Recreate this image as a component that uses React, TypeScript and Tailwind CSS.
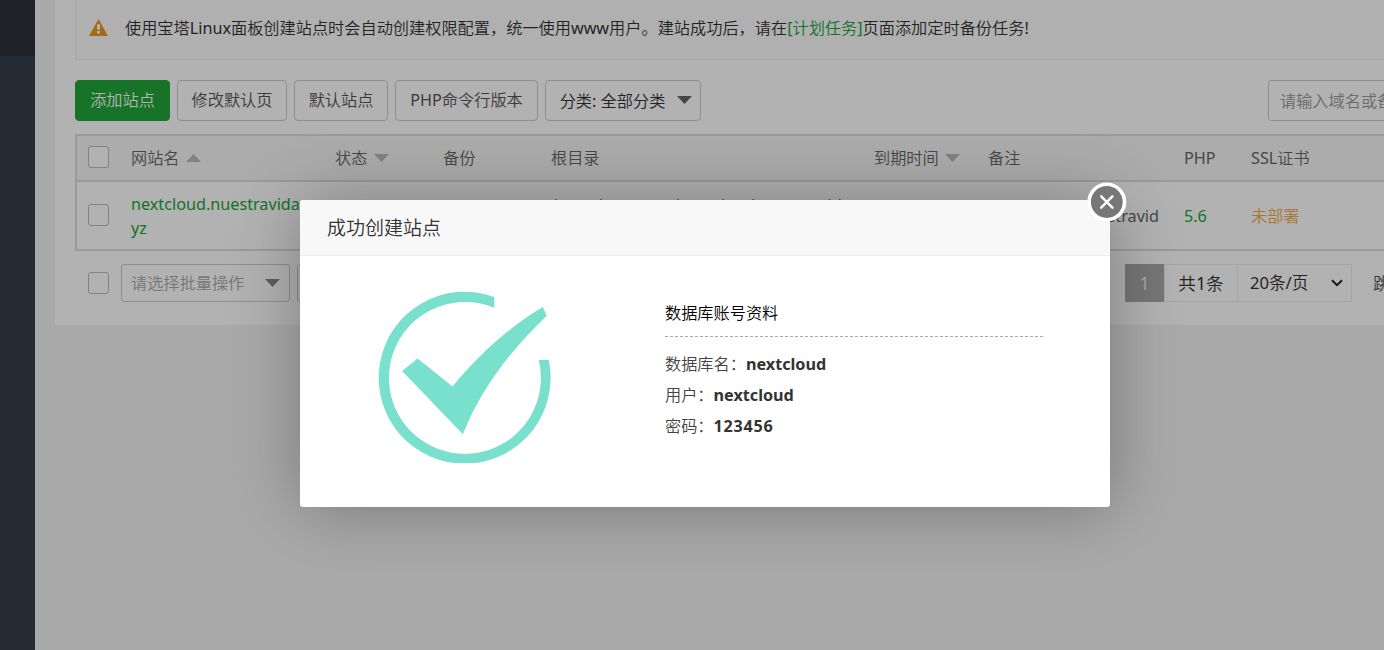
import React from "react";

const Caret = ({ up = false, className = "" }: { up?: boolean; className?: string }) => (
  <svg width="15" height="8" viewBox="0 0 15 8" className={className}>
    <path d={up ? "M0 8L7.5 0L15 8Z" : "M0 0H15L7.5 8Z"} fill="currentColor" />
  </svg>
);

const CheckBox = ({ className = "" }: { className?: string }) => (
  <span className={`box-border h-[22px] w-[21px] shrink-0 rounded-[3px] border border-[#bbb] bg-white ${className}`} />
);

const Button = ({ children, className }: { children: React.ReactNode; className: string }) => (
  <button className={`flex h-[41px] shrink-0 items-center justify-center rounded-[4px] border pb-px ${className}`}>
    {children}
  </button>
);

const columns = "grid grid-cols-[54px_205px_107px_108px_323px_115px_195px_67px_220px]";

function SitePage() {
  return (
    <div className="flex h-[650px] w-[1384px] overflow-hidden bg-[#f2f2f2]">
      <aside className="w-[35px] shrink-0 bg-[#363d49]">
        <div className="h-[56px] bg-[#2c3138]" />
      </aside>
      <main className="ml-5 h-[325px] w-[1329px] shrink-0 overflow-hidden bg-white pl-5">
        <div className="flex h-[60px] w-[1400px] items-center border-b border-l border-[#ececec] bg-[#fcfcfc] pb-[3px] pl-[13px] text-[#333]">
          <svg width="19" height="17" viewBox="0 0 19 17" className="mr-[17px] -mt-[2px]">
            <path d="M9.5 0L19 17H0Z" fill="#f0981c" />
            <path d="M8 5.2H11V10.5H8ZM8 12H11V14.6H8Z" fill="#fff" />
          </svg>
          <p className="whitespace-nowrap">
            使用宝塔Linux面板创建站点时会自动创建权限配置，统一使用www用户。建站成功后，请在
            <a className="text-[#20a53a]">[计划任务]</a>页面添加定时备份任务!
          </p>
        </div>

        <div className="mt-5 flex w-[1400px] gap-[7px] text-[#555]">
          <Button className="w-[95px] border-[#20a53a] bg-[#20a53a] text-white">添加站点</Button>
          <Button className="w-[110px] border-[#ccc] bg-white">修改默认页</Button>
          <Button className="w-[94px] border-[#ccc] bg-white">默认站点</Button>
          <Button className="w-[143px] border-[#ccc] bg-white">PHP命令行版本</Button>
          <Button className="w-[156px] gap-3 border-[#ccc] bg-white pl-[6px] text-[#333]">
            <span className="pt-px">分类: 全部分类</span>
            <Caret className="text-[#666]" />
          </Button>
          <div className="ml-[560px] flex h-[41px] w-[250px] items-center rounded-[3px] border border-[#ccc] pl-[11px] text-[#999]">
            请输入域名或备注
          </div>
        </div>

        <section className="mt-[13px] h-[117px] w-[1400px] border-2 border-[#ddd]">
          <div className={`${columns} h-[46px] items-center border-b-2 border-[#ddd] bg-[#f6f6f6] text-[#666]`}>
            <CheckBox className="-mt-[2px] ml-[11px]" />
            <span className="flex items-center gap-[6px]">网站名<Caret up className="text-[#bbb]" /></span>
            <span className="-ml-px flex items-center gap-[7px]">状态<Caret className="text-[#bbb]" /></span>
            <span>备份</span>
            <span>根目录</span>
            <span className="flex items-center gap-[6px]">到期时间<Caret className="text-[#bbb]" /></span>
            <span className="-ml-px">备注</span>
            <span>PHP</span>
            <span>SSL证书</span>
          </div>
          <div className={`${columns} h-[67px] items-center text-[#666]`}>
            <CheckBox className="-mt-px ml-[11px]" />
            <span className="leading-6 text-[#20a53a]">nextcloud.nuestravida<br />yz</span>
            <span />
            <span />
            <span className="pt-[3px] leading-6 tracking-[0.15px] text-[#20a53a]">/www/wwwroot/nextcloud.nuestravida<br />xyz</span>
            <span />
            <span className="pr-[25px] text-right">nextcloud.nuestravid</span>
            <span className="text-[#20a53a]">5.6</span>
            <span className="text-[#f0ad4e]">未部署</span>
          </div>
        </section>

        <div className="mt-[13px] flex h-[38px] w-[1400px] items-center pl-[13px]">
          <CheckBox />
          <div className="ml-3 flex h-[38px] w-[169px] items-center justify-between rounded-[3px] border border-[#ccc] pl-[9px] pr-[9px] text-[#aaa]">
            请选择批量操作
            <Caret className="text-[#888]" />
          </div>
          <div className="ml-[7px] h-[38px] w-[90px] rounded-[3px] border border-[#ccc]" />
          <div className="ml-[738px] flex h-[38px] items-center text-[17.6px] text-[#333]">
            <span className="flex h-[38px] w-[39px] items-center justify-center bg-[#a9a9a9] text-[#eee]">1</span>
            <span className="flex h-[38px] w-[74px] items-center justify-center border border-[#ececec]">共1条</span>
            <span className="-ml-px flex h-[38px] w-[115px] items-center justify-between border border-[#ececec] pl-[12px] pr-[8px] text-[16.6px]">
              20条/页
              <svg width="12" height="8" viewBox="0 0 12 8">
                <path d="M1 1.2L6 6.2L11 1.2" fill="none" stroke="#222" strokeWidth="2" />
              </svg>
            </span>
            <span className="ml-[21px] text-[#555]">跳转到</span>
          </div>
        </div>
      </main>
    </div>
  );
}

const details = [
  { label: "数据库名：", value: "nextcloud", spacing: "" },
  { label: "用户：", value: "nextcloud", spacing: "" },
  { label: "密码：", value: "123456", spacing: "tracking-[0.75px]" },
];

function SuccessDialog() {
  return (
    <div className="absolute left-[300px] top-[200px] h-[307px] w-[810px] rounded-[3px] bg-white shadow-[1px_1px_68px_rgba(0,0,0,0.3)]">
      <header className="flex h-[56px] items-center rounded-t-[3px] border-b border-[#eee] bg-[#f8f8f8] pl-[27px] text-[19px] text-[#333]">
        成功创建站点
      </header>
      <div className="flex">
        <svg width="174" height="171" viewBox="0 0 174 171" className="ml-[78px] mt-[36px] shrink-0">
          <path
            d="M116.3 5A86 86 0 1 0 170.8 68H160.8A76 76 0 1 1 116.3 15.8Z"
            fill="#78e0cd"
          />
          <path d="M24.1 79.1L39.6 66.4L74.6 94.4C98 66 129 36 164.8 15L168.8 23.7C135 56 104 94 84.9 142.2Z" fill="#78e0cd" />
        </svg>
        <div className="ml-[113px] w-[378px] pt-[44px] text-[#444]">
          <h3 className="h-[37px] border-b border-dashed border-[#aaa] leading-[27px] text-black">数据库账号资料</h3>
          <div className="pt-[11px]">
            {details.map(({ label, value, spacing }) => (
              <p key={label} className="flex h-[31px] items-center">
                {label}
                <strong className={`font-bold text-[#333] ${spacing}`}>{value}</strong>
              </p>
            ))}
          </div>
        </div>
      </div>
      <button aria-label="关闭" className="absolute left-[787px] top-[-18px] h-[40px] w-[40px]">
        <svg width="40" height="40" viewBox="0 0 40 40">
          <circle cx="19.8" cy="20" r="17.7" fill="#777" stroke="#fff" strokeWidth="3.6" />
          <path d="M14.2 14.4L25.4 25.6M25.4 14.4L14.2 25.6" stroke="#fff" strokeWidth="2.5" strokeLinecap="round" />
        </svg>
      </button>
    </div>
  );
}

export default function App() {
  return (
    <div className="relative h-[650px] w-[1384px] overflow-hidden font-['Noto_Sans','Noto_Sans_CJK_SC_DemiLight','Noto_Sans_CJK_SC',sans-serif] text-[16.2px] leading-6">
      <SitePage />
      <div className="absolute inset-0 bg-black/30" />
      <SuccessDialog />
    </div>
  );
}
